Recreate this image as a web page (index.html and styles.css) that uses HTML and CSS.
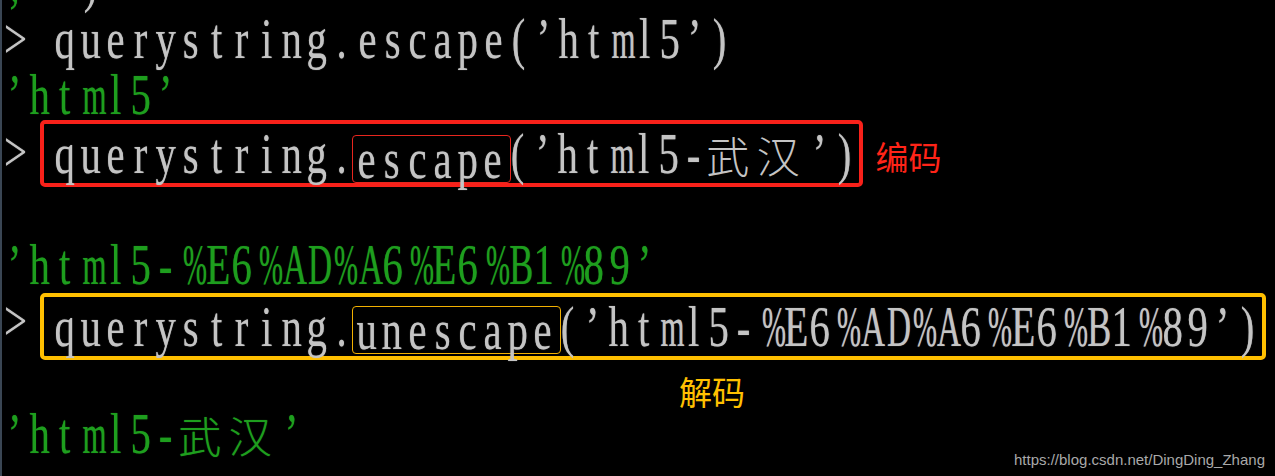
FILE: index.html
```html
<!DOCTYPE html>
<html>
<head>
  <title>querystring escape / unescape</title>
  <link rel="stylesheet" href="styles.css">
</head>
<body>

  <!-- Console -->
  <div class="console">
    <div class="term">

      <div class="line">
        <span class="t out">,</span><span class="t">  )</span>
      </div>

      <div class="line">
        <span class="t">&gt; querystring.escape(’html5’)</span>
      </div>

      <div class="line">
        <span class="t out">’html5’</span>
      </div>

      <!-- escape, red box -->
      <div class="line">
        <span class="prompt"><span class="t">&gt;</span></span>
        <div class="box box-red">
          <span class="t">querystring.</span>
          <span class="mark mark-red"><span class="t">escape</span></span>
          <span class="t">(’html5-</span>
          <span class="wide">武</span>
          <span class="wide">汉</span>
          <span class="t">’)</span>
        </div>
        <span class="label label-red">编码</span>
      </div>

      <div class="line"></div>

      <div class="line">
        <span class="t out">’html5-%E6%AD%A6%E6%B1%89’</span>
      </div>

      <!-- unescape, yellow box -->
      <div class="line">
        <span class="prompt"><span class="t">&gt;</span></span>
        <div class="box box-yellow">
          <span class="t">querystring.</span>
          <span class="mark mark-yellow"><span class="t">unescape</span></span>
          <span class="t">(’html5-%E6%AD%A6%E6%B1%89’)</span>
        </div>
      </div>

      <div class="line">
        <span class="label label-yellow">解码</span>
      </div>

      <div class="line">
        <span class="t out">’html5-</span>
        <span class="wide out">武</span>
        <span class="wide out">汉</span>
        <span class="t out">’</span>
      </div>

    </div>
  </div>

  <div class="watermark">https://blog.csdn.net/DingDing_Zhang</div>

  <script src="script.js"></script>
</body>
</html>
```

FILE: styles.css
```css
body {
  margin: 0;
  padding: 0;
  background-color: #000;
  width: 1275px;
  height: 476px;
  overflow: hidden;
  position: relative;
}

/* Console window */
.console {
  height: 476px;
  border-left: 2px solid #3a4654;
  overflow: hidden;
}

.term {
  margin-top: -46px;
}

.line {
  display: flex;
  align-items: center;
  height: 56.5px;
  white-space: pre;
}

    /* one text run, split into 25.2px cells by script.js */
    .t {
      display: flex;
      align-items: center;
      font-family: "Liberation Serif", serif;
      font-size: 48px;
      line-height: 44px;
      color: #c4c4c4;
      text-shadow: 0 0 1px rgba(196, 196, 196, 0.7);
    }

    .t .c {
      display: inline-block;
      width: 25.2px;
      flex-shrink: 0;
      text-align: center;
      transform: scale(0.85, 1.2);
    }

    .out {
      color: #1e9e1e;
      text-shadow: 0 0 1px rgba(30, 158, 30, 0.7);
    }

    .wide {
      width: 50.4px;
      flex-shrink: 0;
      font-family: "Noto Sans CJK SC", sans-serif;
      font-size: 43px;
      font-weight: 300;
      line-height: 50px;
      color: #c4c4c4;
    }

    .wide.out {
      color: #1e9e1e;
    }

    .prompt {
      width: 38px;
      display: flex;
    }

    /* Highlight boxes */
    .box {
      display: flex;
      align-items: center;
      height: 59px;
      flex-shrink: 0;
      padding: 0 2px 0 8.4px;
      border: 4px solid;
      border-radius: 5px;
    }

    .box-red {
      border-color: #f8211a;
      margin-top: 4px;
    }

    .box-yellow {
      border-color: #ffbf00;
      margin-top: 11px;
    }

    .mark {
      display: flex;
      align-items: center;
      height: 46px;
      border: 1.5px solid;
      border-radius: 4px;
      padding: 0 4.5px 0 1.5px;
      margin: 0 -6px 0 -3px;
    }

    .mark-red {
      border-color: #e8261e;
      margin-top: 10px;
    }

    .mark-yellow {
      border-color: #f2b000;
      margin-top: 7px;
    }

    /* Annotations */
    .label {
      font-family: "Noto Sans CJK SC", sans-serif;
      font-size: 33px;
      line-height: 40px;
    }

    .label-red {
      color: #ff2418;
      margin-left: 12px;
      margin-top: 8px;
    }

    .label-yellow {
      color: #ffc000;
      margin-left: 677px;
      margin-top: 26px;
    }

.watermark {
  position: absolute;
  right: 10px;
  bottom: 8px;
  font-family: "Liberation Sans", Arial, sans-serif;
  font-size: 15px;
  color: #a9a9a9;
}
```

FILE: script.js
```js
// split each console run into fixed-width cells, like the terminal font
const ctx = document.createElement('canvas').getContext('2d');
ctx.font = '48px "Liberation Serif"';

document.querySelectorAll('.t').forEach(function (el) {
  const text = el.textContent;
  el.textContent = '';
  for (const ch of text) {
    const cell = document.createElement('span');
    cell.className = 'c';
    cell.textContent = ch;
    // squeeze wide glyphs so they fit their cell
    const w = ctx.measureText(ch).width;
    if (w > 0) {
      const sx = Math.min(0.85, 24 / w);
      cell.style.transform = 'scale(' + sx.toFixed(3) + ', 1.2)';
    }
    el.appendChild(cell);
  }
});
```
